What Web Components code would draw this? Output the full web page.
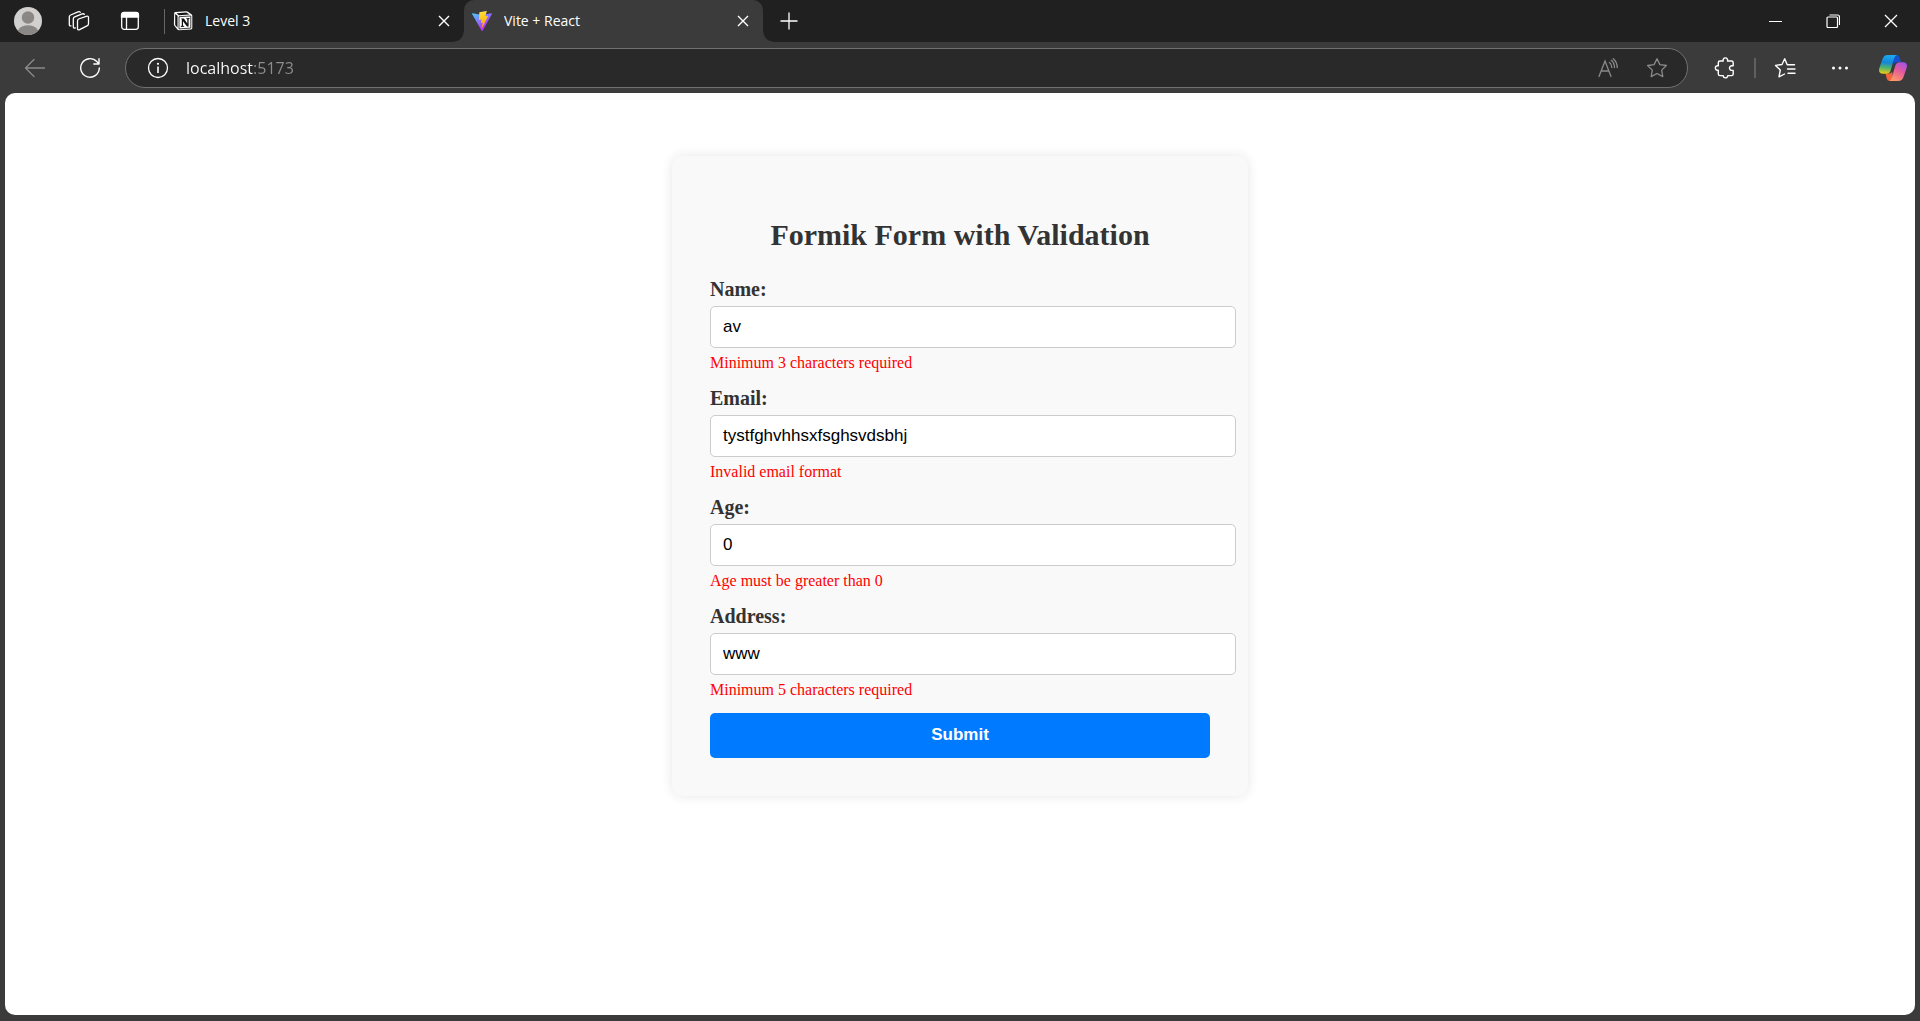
<!DOCTYPE html>
<html lang="en">
<head>
<meta charset="utf-8">
<title>Vite + React</title>
<style>
  html, body { margin: 0; height: 100%; }
  body { background: #3b3b3b; }
</style>
</head>
<body>
<browser-window>
  <tab-strip slot="tabs">
    <browser-tab label="Level 3">
      <svg slot="icon" width="20" height="20" viewBox="0 0 20 20"><path d="M1.200 1.800Q1.400 1 2.500.9L13.500.3q1 0 1.800.6L18.500 3.200q.8.6.8 1.600v12.200q0 1.300-1.300 1.500L6 19.300q-1 0-1.600-.8L1.400 14.700q-.5-.7-.5-1.500z" fill="#fff"/><path d="M2.200 3 4.500 4.800v12L2.200 13.900z" fill="#151515"/><path d="M3.600 2.200 13.400 1.500 16.500 3.600 5.900 4.200z" fill="#151515"/><path d="M6 5.700 17.800 5v12.100L6 17.900z" fill="#fff" stroke="#151515" stroke-width=".8"/><path d="M8 7.600h2.900l3.400 5V8.300l-1-.2v-.9l3.200-.2v.9l-.9.3v7.400h-1.600L10 10.200v4.500l1.200.3v.8l-3.300.2v-.9l.9-.3V8.500z" fill="#111"/></svg>
    </browser-tab>
    <browser-tab label="Vite + React" active>
      <svg slot="icon" width="20" height="20" viewBox="0 0 256 257"><defs><linearGradient id="va" x1="0" x2=".58" y1="0" y2=".8"><stop stop-color="#41D1FF"/><stop offset="1" stop-color="#BD34FE"/></linearGradient><linearGradient id="vb" x1=".43" x2=".5" y1=".02" y2=".9"><stop stop-color="#FFEA83"/><stop offset=".08" stop-color="#FFDD35"/><stop offset="1" stop-color="#FFA800"/></linearGradient></defs><path fill="url(#va)" d="M255.153 37.938 134.897 252.976c-2.483 4.44-8.862 4.466-11.382.048L.875 37.958c-2.746-4.814 1.371-10.646 6.827-9.67l120.385 21.517a6.537 6.537 0 0 0 2.322-.004l117.867-21.483c5.438-.991 9.574 4.796 6.877 9.62Z"/><path fill="url(#vb)" d="M185.432.063 96.44 17.501a3.268 3.268 0 0 0-2.634 3.014l-5.474 92.456a3.268 3.268 0 0 0 3.997 3.378l24.777-5.718c2.318-.535 4.413 1.507 3.936 3.838l-7.361 36.047c-.495 2.426 1.782 4.5 4.151 3.78l15.304-4.649c2.372-.72 4.652 1.36 4.15 3.788l-11.698 56.621c-.732 3.542 3.979 5.473 5.943 2.437l1.313-2.028 72.516-144.72c1.215-2.423-.88-5.186-3.54-4.672l-25.505 4.922c-2.396.462-4.435-1.77-3.759-4.114l16.646-57.705c.677-2.35-1.37-4.583-3.769-4.113Z"/></svg>
    </browser-tab>
  </tab-strip>
  <address-toolbar slot="toolbar"></address-toolbar>
  <form-card heading="Formik Form with Validation">
    <form-field name="name" label="Name:" value="av" error="Minimum 3 characters required"></form-field>
    <form-field name="email" label="Email:" value="tystfghvhhsxfsghsvdsbhj" error="Invalid email format"></form-field>
    <form-field name="age" label="Age:" value="0" error="Age must be greater than 0"></form-field>
    <form-field name="address" label="Address:" value="www" error="Minimum 5 characters required"></form-field>
  </form-card>
</browser-window>

<script>
const define = (name, render, after) => customElements.define(name, class extends HTMLElement {
  connectedCallback() {
    if (this.shadowRoot) return;
    this.attachShadow({ mode: 'open' }).innerHTML = render(this);
    if (after) after(this);
  }
});

define('browser-window', () => `
<style>
  :host { display: flex; flex-direction: column; min-height: 100vh; background: #3b3b3b; font-family: "Open Sans", "Noto Sans", sans-serif; }
  main { flex: 1; display: flex; justify-content: center; align-items: flex-start; margin: 0 5px 6px; padding-top: 63px; background: #fff; border-radius: 10px; font-family: "Liberation Serif", serif; }
</style>
<slot name="tabs"></slot>
<slot name="toolbar"></slot>
<main><slot></slot></main>`);

/* Square, borderless button that centres the icon passed to it. */
define('icon-button', el => `
<style>
  :host { display: block; flex: none; width: 40px; height: 40px; color: #fff; }
  button { display: flex; align-items: center; justify-content: center; width: 100%; height: 100%; margin: 0; padding: 0; border: 0; background: none; color: inherit; }
  ::slotted(svg) { display: block; fill: none; stroke: currentColor; }
</style>
<button type="button" aria-label="${el.getAttribute('label')}"><slot></slot></button>`);

define('tab-strip', () => `
<style>
  :host { display: flex; align-items: center; height: 42px; background: #202020; }
  .tools { display: flex; gap: 11px; padding: 0 14px 0 8px; }
  .tabs { display: flex; flex: 0 1 598px; height: 100%; position: relative; }
  .divider { width: 1px; height: 25px; background: #666; }
  .new { margin-left: 6px; }
  .window { display: flex; margin-left: auto; }
  .window icon-button { width: 58px; }
</style>
<div class="tools">
  <icon-button label="Profile"><svg width="28" height="28" viewBox="0 0 28 28" style="stroke:none"><defs><clipPath id="c"><circle cx="14" cy="14" r="14"/></clipPath></defs><g clip-path="url(#c)"><path d="M0 0h28v28H0z" fill="#d2d0ce"/><circle cx="14" cy="10.5" r="6.2" fill="#8a8785"/><ellipse cx="14" cy="25" rx="10.5" ry="6.8" fill="#8a8785"/></g></svg></icon-button>
  <icon-button label="Workspaces"><svg width="22" height="22" viewBox="0 0 22 22" stroke-width="1.3" stroke-linejoin="round" stroke-linecap="round"><path d="m10.6 9 7.6-2.700q2.300-.7 2.300 1.500v6q0 1.500-1.500 2.100l-7.400 3.800q-2.100.8-2.100-1.300v-7.200q0-1.600 1.100-2.200z"/><path d="M7.300 17.900q-2 .6-2-1.400V8.900q0-1.500 1.400-2.100l7.500-2.900q1.600-.5 2.100.5"/><path d="M3 15.800q-1.700.4-1.700-1.400V7q0-1.500 1.300-2L10 1.900q1.700-.6 2.200.4"/></svg></icon-button>
  <icon-button label="Tab actions"><svg width="20" height="20" viewBox="0 0 20 20" stroke-width="1.3"><rect x="1.700" y="1.700" width="16.600" height="16.600" rx="2.500"/><path d="M1.500 6V4q0-2.500 2.500-2.500h12q2.500 0 2.500 2.500v2z" fill="#fff"/><path d="M6.500 6v12"/></svg></icon-button>
</div>
<div class="divider"></div>
<div class="tabs"><slot></slot></div>
<icon-button class="new" label="New tab"><svg width="18" height="18" viewBox="0 0 18 18" stroke-width="1.3"><path d="M9 .5v17M.5 9h17"/></svg></icon-button>
<div class="window">
  <icon-button label="Minimize"><svg width="13" height="13" viewBox="0 0 13 13"><path d="M0 6.500h13"/></svg></icon-button>
  <icon-button label="Restore"><svg width="14" height="14" viewBox="0 0 14 14" stroke-width="1.200"><rect x="1" y="3" width="10.500" height="10.500" rx="1"/><path d="M3.500 1h8q2 0 2 2v8"/></svg></icon-button>
  <icon-button label="Close window"><svg width="14" height="14" viewBox="0 0 14 14" stroke-width="1.300"><path d="m1 1 12 12M13 1 1 13"/></svg></icon-button>
</div>`);

define('browser-tab', el => `
<style>
  :host { display: flex; flex: 1; align-items: center; min-width: 0; box-sizing: border-box; padding: 0 8px; position: relative; color: #fff; font-size: 14px; line-height: 20px; }
  :host([active]) { background: #3b3b3b; border-radius: 10px 10px 0 0; }
  /* concave feet joining the active tab to the toolbar */
  :host([active])::before, :host([active])::after { content: ""; position: absolute; bottom: 0; width: 10px; height: 10px; }
  :host([active])::before { right: 100%; background: radial-gradient(circle at 0 0, transparent 9px, #3b3b3b 10px); }
  :host([active])::after { left: 100%; background: radial-gradient(circle at 100% 0, transparent 9px, #3b3b3b 10px); }
  ::slotted(svg) { display: block; flex: none; }
  .title { flex: 1; min-width: 0; margin-left: 12px; white-space: nowrap; overflow: hidden; }
  icon-button { width: 24px; height: 24px; }
</style>
<slot name="icon"></slot>
<span class="title">${el.getAttribute('label')}</span>
<icon-button label="Close tab"><svg width="12" height="12" viewBox="0 0 12 12" stroke-width="1.400"><path d="m1 1 10 10M11 1 1 11"/></svg></icon-button>`);

define('address-toolbar', () => `
<style>
  :host { display: flex; align-items: center; height: 51px; padding: 0 7px 0 15px; gap: 15px; box-sizing: border-box; }
  .bar { flex: 1; min-width: 0; display: flex; align-items: center; box-sizing: border-box; height: 40px; padding: 0 10px 0 12px; border: 1px solid #707070; border-radius: 20px; background: #292929; }
  .bar icon-button { height: 36px; }
  .muted { color: #8a8a8a; }
  .gap { width: 9px; }
  input { flex: 1; min-width: 0; height: 30px; padding: 0; margin: 0 0 0 8px; border: 0; outline: 0; font: 16px/24px "Open Sans", "Noto Sans", sans-serif; color: #fff; background: linear-gradient(90deg, #fff var(--host-width), #8e8e8e var(--host-width)); background-clip: text; -webkit-background-clip: text; -webkit-text-fill-color: transparent; --host-width: 68px; }
  .extras { display: flex; align-items: center; margin-left: 2px; }
  .divider { width: 2px; height: 20px; margin: 0 9px; background: #606060; }
  .menu { margin: 0 13px 0 15px; }
</style>
<icon-button label="Back" class="muted"><svg width="22" height="20" viewBox="0 0 22 20" stroke-width="1.300" stroke-linecap="round" stroke-linejoin="round"><path d="M20.500 10H1.500M10 1.500 1.500 10l8.500 8.500"/></svg></icon-button>
<icon-button label="Refresh"><svg width="22" height="22" viewBox="0 0 22 22" stroke-width="1.400" stroke-linecap="round" stroke-linejoin="round"><path d="M20.300 11A9.300 9.300 0 1 1 17.800 4.600L19.800 6.700M20 1.800v5.200h-5.200"/></svg></icon-button>
<div class="bar">
  <icon-button label="Site information"><svg width="22" height="22" viewBox="0 0 22 22" stroke-width="1.300"><circle cx="11" cy="11" r="9.500"/><path d="M11 9.500v6.500" stroke-width="1.600"/><circle cx="11" cy="6.800" r="1.100" fill="#fff" stroke="none"/></svg></icon-button>
  <input type="text" aria-label="Address and search bar" value="localhost:5173" spellcheck="false">
  <icon-button label="Read aloud" class="muted"><svg width="22" height="20" viewBox="0 0 22 20" stroke-width="1.300" stroke-linecap="round"><path d="m2 18.500 6-15.500 6 15.500M4.200 13h7.600M12.500 4.500q2.300 1.700 2.300 5M14.300 2.300q3.200 2.700 3.200 7.200M16.200.8q4 3.200 4 8.700"/></svg></icon-button>
  <div class="gap"></div>
  <icon-button label="Add to favorites" class="muted"><svg width="22" height="22" viewBox="0 0 22 22" stroke-width="1.300" stroke-linejoin="round"><path d="m11 1.700 2.900 5.900 6.500.9-4.700 4.600 1.100 6.500L11 16.500l-5.800 3.100 1.100-6.500L1.600 8.500l6.500-.9z"/></svg></icon-button>
</div>
<div class="extras">
  <icon-button label="Extensions"><svg width="22" height="22" viewBox="0 0 22 22" stroke-width="1.400" stroke-linejoin="round"><path d="M6 4h3.200a2.300 2.300 0 1 1 4.300 0H17.500q1.700 0 1.700 1.700v3.100h-1.400a2.300 2.300 0 1 0 0 4.600h1.400v3.500q0 1.700-1.700 1.700h-3.700a2.300 2.300 0 1 1-4.600 0H6q-1.700 0-1.700-1.700v-3.700a2.300 2.300 0 1 1 0-4.400V5.700Q4.300 4 6 4z"/></svg></icon-button>
  <div class="divider"></div>
  <icon-button label="Favorites"><svg width="22" height="22" viewBox="0 0 22 22" stroke-width="1.400" stroke-linejoin="round" stroke-linecap="round"><path d="M14.500 7.700h-1.300L10.700 1.800 8 7.500l-6.500.9 4.800 4.600-1.300 6.800L10.500 17M14.500 7.700h6M13.500 12h7.500M14 16.300h7"/></svg></icon-button>
  <icon-button label="Settings and more" class="menu"><svg width="18" height="4" viewBox="0 0 18 4" style="stroke:none;fill:#fff"><circle cx="2.500" cy="2" r="1.500"/><circle cx="9" cy="2" r="1.500"/><circle cx="15.500" cy="2" r="1.500"/></svg></icon-button>
  <icon-button label="Copilot"><svg width="28" height="26" viewBox="0 0 28 26" style="stroke:none"><defs>
    <linearGradient id="p1" x1=".4" y1="0" x2=".3" y2="1"><stop stop-color="#1ba9ef"/><stop offset=".4" stop-color="#1586d8"/><stop offset=".7" stop-color="#57b768"/><stop offset="1" stop-color="#f2cb12"/></linearGradient>
    <linearGradient id="p2" x1=".8" y1="0" x2=".3" y2="1"><stop stop-color="#a552e8"/><stop offset=".45" stop-color="#e65a9c"/><stop offset="1" stop-color="#ff9a68"/></linearGradient></defs>
    <path d="M14 0h3.500q2.300 0 3 2.300L22 7h-4q-2.500 0-3.300 2.500z" fill="#184fcd"/>
    <path d="M14 26h-3q-2.500 0-3.300-2.500L6.500 18.500H10q2.500 0 3.200-2z" fill="#f4643a"/>
    <path d="M8.500 0H18q-2 .5-2.800 3.200l-3.500 12q-1 3.500-4.200 3.500H4Q-1 18.500.3 13.300L3.500 4Q5 0 8.500 0z" fill="url(#p1)"/>
    <path d="M19.500 26H10q2-.5 2.800-3.200l3.500-12q1-3.500 4.200-3.500H24q5 .2 3.700 5.400L24.500 22Q23 26 19.500 26z" fill="url(#p2)"/></svg></icon-button>
</div>`);

define('form-card', el => `
<style>
  :host { display: block; box-sizing: border-box; width: 576px; max-width: 100%; padding: 38px; background: #f9f9f9; border-radius: 10px; box-shadow: 0 0 12px rgba(0, 0, 0, .1); color: #333; }
  h2 { margin: 24px 0 25px; font-size: 30px; line-height: 34px; text-align: center; }
  form { margin: 0; }
  button { display: block; width: 100%; height: 45px; padding: 0 0 2px; border: 0; border-radius: 5px; background: #007bff; color: #fff; font: bold 17px/20px "Liberation Sans", sans-serif; }
</style>
<h2>${el.getAttribute('heading')}</h2>
<form novalidate>
  <slot></slot>
  <button type="submit">Submit</button>
</form>`, el => el.shadowRoot.querySelector('form').addEventListener('submit', e => e.preventDefault()));

define('form-field', el => `
<style>
  :host { display: block; margin-bottom: 14px; }
  label { display: block; margin-bottom: 5px; font-size: 20px; line-height: 24px; font-weight: bold; }
  /* content-box: padding and border extend past the form's right edge */
  input { display: block; box-sizing: content-box; width: 100%; height: 20px; margin: 0; padding: 10px 12px; border: 1px solid #ccc; border-radius: 5px; background: #fff; color: #000; font: 17px/20px "Liberation Sans", sans-serif; }
  .error { margin-top: 6px; color: #f00; font-size: 16px; line-height: 18px; }
</style>
<label for="f">${el.getAttribute('label')}</label>
<input id="f" type="text" name="${el.getAttribute('name')}" value="${el.getAttribute('value')}" aria-describedby="e">
<div class="error" id="e">${el.getAttribute('error')}</div>`);
</script>
</body>
</html>
